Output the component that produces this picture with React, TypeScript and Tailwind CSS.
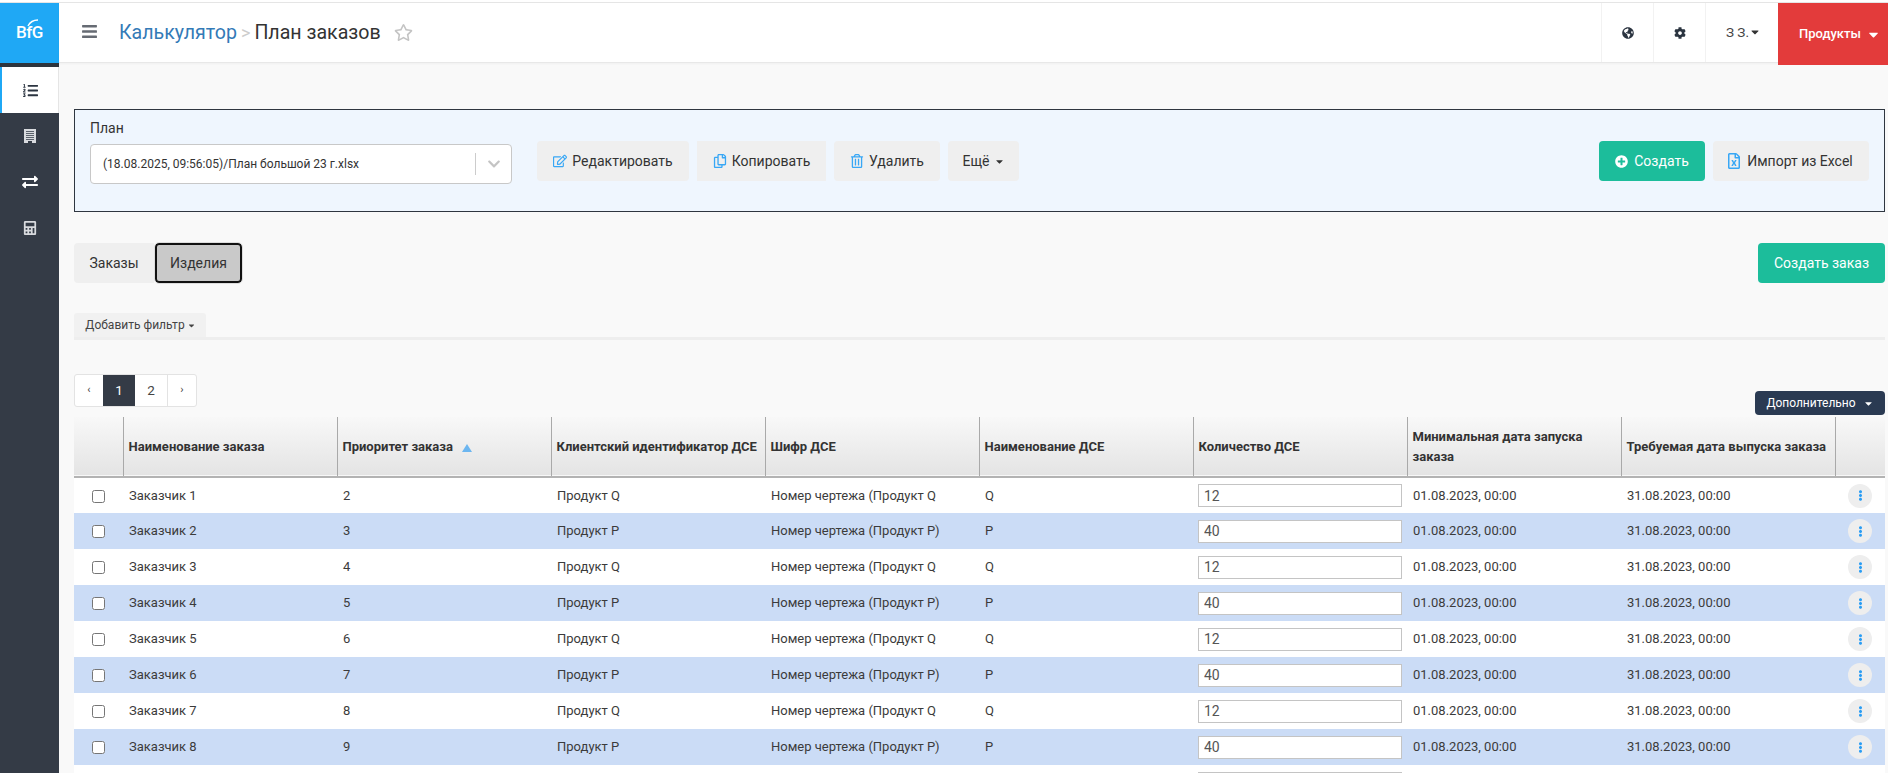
import {
  FaBars,
  FaCalculator,
  FaCaretDown,
  FaCog,
  FaEllipsisV,
  FaExchangeAlt,
  FaGlobeAmericas,
  FaListOl,
  FaPlusCircle,
  FaRegCopy,
  FaRegEdit,
  FaRegFileExcel,
  FaRegStar,
  FaRegTrashAlt,
  FaChevronDown,
} from 'react-icons/fa';

const rows = [
  { name: 'Заказчик 1', priority: 2, id: 'Продукт Q', code: 'Номер чертежа (Продукт Q', dse: 'Q', qty: '12' },
  { name: 'Заказчик 2', priority: 3, id: 'Продукт P', code: 'Номер чертежа (Продукт P)', dse: 'P', qty: '40' },
  { name: 'Заказчик 3', priority: 4, id: 'Продукт Q', code: 'Номер чертежа (Продукт Q', dse: 'Q', qty: '12' },
  { name: 'Заказчик 4', priority: 5, id: 'Продукт P', code: 'Номер чертежа (Продукт P)', dse: 'P', qty: '40' },
  { name: 'Заказчик 5', priority: 6, id: 'Продукт Q', code: 'Номер чертежа (Продукт Q', dse: 'Q', qty: '12' },
  { name: 'Заказчик 6', priority: 7, id: 'Продукт P', code: 'Номер чертежа (Продукт P)', dse: 'P', qty: '40' },
  { name: 'Заказчик 7', priority: 8, id: 'Продукт Q', code: 'Номер чертежа (Продукт Q', dse: 'Q', qty: '12' },
  { name: 'Заказчик 8', priority: 9, id: 'Продукт P', code: 'Номер чертежа (Продукт P)', dse: 'P', qty: '40' },
];

const BuildingIcon = () => (
  <svg width="12" height="14" viewBox="0 0 12 14" fill="#d8dade">
    <path d="M0 0h12v14H8v-2H4v2H0z" />
    <path d="M2 2h8v1H2zM2 4h8v1H2zM2 6h8v1H2zM2 8h8v1H2zM2 10h8v1H2z" fill="#5a616b" />
  </svg>
);

const Logo = () => (
  <div className="flex h-[60px] items-center justify-center bg-[#1fa8f5] text-[17px] font-medium text-white">
    <span className="relative tracking-[-0.5px]">
      BfG
      <svg className="absolute top-[-1px] left-[11px]" width="14" height="8" viewBox="0 0 14 8" fill="none">
        <path d="M1 7C3 3 6 1 11 1" stroke="#ffffff" strokeWidth="1.4" />
      </svg>
    </span>
  </div>
);

const Sidebar = () => (
  <aside className="flex w-[59px] shrink-0 flex-col bg-[#343b46]">
    <Logo />
    <div className="h-1 bg-[#2d343d]" />
    <div className="flex h-[46px] items-center justify-center border-l-2 border-r border-l-[#1fa8f5] border-r-[#e5e5e5] bg-white text-[15px] text-[#2b3440]">
      <FaListOl />
    </div>
    <div className="flex h-[46px] items-center justify-center">
      <BuildingIcon />
    </div>
    <div className="flex h-[46px] items-center justify-center text-[16px] text-white">
      <FaExchangeAlt />
    </div>
    <div className="flex h-[46px] items-center justify-center text-[14px] text-[#d8dade]">
      <FaCalculator />
    </div>
  </aside>
);

const Header = () => (
  <header className="relative flex h-[60px] items-center border-b border-[#e8e8e8] bg-white shadow-[0_1px_2px_rgba(0,0,0,0.04)]">
    <FaBars className="mb-[2px] ml-[22px] text-[17px] text-[#666b73]" />
    <div className="ml-[21px] flex items-center text-[19.6px] leading-none">
      <span className="text-[#337ab7]">Калькулятор</span>
      <span className="mx-[4px] text-[18px] text-[#ccc]">&gt;</span>
      <span className="text-[#333]">План заказов</span>
      <FaRegStar className="ml-[13px] text-[19px] text-[#c4c4c4]" />
    </div>
    <div className="ml-auto flex h-full items-center self-stretch">
      <div className="flex h-full w-[52px] items-center justify-center border-l border-[#f2f2f2] text-[12px] text-[#2b3440]">
        <FaGlobeAmericas />
      </div>
      <div className="flex h-full w-[52px] items-center justify-center border-l border-[#f2f2f2] text-[12px] text-[#2b3440]">
        <FaCog />
      </div>
      <div className="flex h-full w-[73px] items-center border-l border-[#f2f2f2] pb-[1px] pl-[20px] text-[13.5px] text-[#444]">
        З З.
        <FaCaretDown className="text-[12px] text-[#333]" />
      </div>
      <div className="mb-[-3px] flex h-[62px] w-[110px] items-center bg-[#e33b3b] pl-[21px] text-[13px] font-medium text-white">
        Продукты
        <FaCaretDown className="ml-[5px] text-[15px]" />
      </div>
    </div>
  </header>
);

const ToolButton = ({ icon, label, className }: { icon: React.ReactNode; label: string; className: string }) => (
  <button className={`flex h-10 items-center justify-center gap-[5px] bg-[#efefef] text-[14px] text-[#333] ${className}`}>
    <span className="text-[14px] text-[#38a7f5]">{icon}</span>
    {label}
  </button>
);

const PlanBox = () => (
  <section className="flex h-[103px] items-start border border-[#2f3640] bg-[#eff6fe] px-[15px]">
    <div className="w-[422px] shrink-0">
      <div className="mt-[6px] h-[28px] text-[14px] leading-[24px] text-[#333]">План</div>
      <div className="flex h-10 items-center rounded-[4px] border border-[#c8c8c8] bg-white pl-[12px] text-[12px] text-[#333]">
        (18.08.2025, 09:56:05)/План большой 23 г.xlsx
        <div className="ml-auto flex h-[22px] w-[36px] items-center justify-center border-l border-[#ccc]">
          <FaChevronDown className="text-[14px] text-[#c4c4c4]" />
        </div>
      </div>
    </div>
    <div className="mt-[31px] ml-[25px] flex gap-2">
      <ToolButton icon={<FaRegEdit />} label="Редактировать" className="w-[152px] rounded-[4px]" />
      <ToolButton icon={<FaRegCopy />} label="Копировать" className="w-[129px]" />
      <ToolButton icon={<FaRegTrashAlt />} label="Удалить" className="w-[106px] rounded-[4px]" />
      <button className="flex h-10 w-[71px] items-center justify-center gap-[4px] rounded-[4px] bg-[#efefef] text-[14px] text-[#333]">
        Ещё
        <FaCaretDown className="text-[11px]" />
      </button>
    </div>
    <div className="mt-[31px] ml-auto flex gap-2">
      <button className="flex h-10 w-[106px] items-center justify-center gap-[6px] rounded-[4px] bg-[#1cbd9b] text-[14px] text-white">
        <FaPlusCircle className="text-[13px]" />
        Создать
      </button>
      <ToolButton
        icon={<FaRegFileExcel className="text-[16px]" />}
        label="Импорт из Excel"
        className="w-[156px] rounded-[4px] pr-[3px]"
      />
    </div>
  </section>
);

const Tabs = () => (
  <div className="mt-[31px] flex items-start justify-between">
    <div className="flex h-10 text-[14px] text-[#333]">
      <button className="w-20 rounded-l-[4px] bg-[#efefef]">Заказы</button>
      <button className="ml-[1px] w-[87px] rounded-[4px] border-2 border-[#111] bg-[#c9c9c9] outline outline-1 outline-[#ddd]">
        Изделия
      </button>
    </div>
    <button className="h-10 w-[127px] rounded-[4px] bg-[#1cbd9b] text-[14px] text-white">Создать заказ</button>
  </div>
);

const FilterBar = () => (
  <div className="mt-[30px] border-b-[3px] border-[#eeeeee]">
    <button className="flex h-6 w-[132px] items-center justify-center gap-[2px] rounded-t-[3px] bg-[#f1f1f1] pl-[1px] text-[12px] text-[#444]">
      Добавить фильтр
      <FaCaretDown className="text-[9px]" />
    </button>
  </div>
);

const Pagination = () => (
  <div className="mt-[34px] flex items-start justify-between">
    <div className="flex h-[33px] overflow-hidden rounded-[3px] border border-[#e3e3e3] bg-white text-[13.5px] text-[#444]">
      <span className="flex w-[28px] items-center justify-center text-[11px]">‹</span>
      <span className="flex w-[32px] items-center justify-center bg-[#343b46] text-white">1</span>
      <span className="flex w-[33px] items-center justify-center border-r border-[#e3e3e3]">2</span>
      <span className="flex w-[28px] items-center justify-center text-[11px]">›</span>
    </div>
    <button className="mt-[17px] flex h-6 w-[130px] items-center justify-center gap-[7px] rounded-[4px] bg-[#2a3a52] text-[12px] text-white">
      Дополнительно
      <FaCaretDown className="text-[11px]" />
    </button>
  </div>
);

const thClass = 'border-l border-[#a9a9a9] px-[5px] text-left text-[13px] font-bold leading-[20px] text-[#333]';

const OrdersTable = () => (
  <table className="mt-[2px] w-full table-fixed border-collapse text-[13px] text-[#3b3b3b]">
    <colgroup>
      <col className="w-[49px]" />
      <col className="w-[214px]" />
      <col className="w-[214px]" />
      <col className="w-[214px]" />
      <col className="w-[214px]" />
      <col className="w-[214px]" />
      <col className="w-[214px]" />
      <col className="w-[214px]" />
      <col className="w-[214px]" />
      <col className="w-[50px]" />
    </colgroup>
    <thead>
      <tr className="h-[60px] border-b-2 border-[#b3b3b3] bg-gradient-to-b from-[#f8f8f8] via-[#eeeeee] to-[#e4e4e4]">
        <th />
        <th className={thClass}>Наименование заказа</th>
        <th className={thClass}>
          Приоритет заказа
          <span className="ml-[9px] inline-block border-x-[5px] border-b-[8px] border-x-transparent border-b-[#6cb6f0] align-[-1px]" />
        </th>
        <th className={thClass}>Клиентский идентификатор ДСЕ</th>
        <th className={thClass}>Шифр ДСЕ</th>
        <th className={thClass}>Наименование ДСЕ</th>
        <th className={thClass}>Количество ДСЕ</th>
        <th className={thClass}>Минимальная дата запуска заказа</th>
        <th className={thClass}>Требуемая дата выпуска заказа</th>
        <th className={thClass} />
      </tr>
    </thead>
    <tbody>
      {rows.map((row, i) => (
        <tr key={row.name} className={i % 2 === 1 ? 'h-[36px] bg-[#cbdcf6]' : 'h-[36px] bg-white'}>
          <td className="text-center">
            <input type="checkbox" className="size-[13px] align-middle" />
          </td>
          <td className="px-[6px]">{row.name}</td>
          <td className="px-[6px]">{row.priority}</td>
          <td className="px-[6px]">{row.id}</td>
          <td className="px-[6px]">{row.code}</td>
          <td className="px-[6px]">{row.dse}</td>
          <td className="px-[5px]">
            <input
              readOnly
              defaultValue={row.qty}
              className="block h-[23px] w-full border border-[#c4c4c4] bg-white px-[5px] text-[14px] text-[#555]"
            />
          </td>
          <td className="px-[6px]">01.08.2023, 00:00</td>
          <td className="px-[6px]">31.08.2023, 00:00</td>
          <td>
            <div className="mx-auto flex size-6 items-center justify-center rounded-full bg-[#eeeeee] text-[11px] text-[#2a9df4]">
              <FaEllipsisV />
            </div>
          </td>
        </tr>
      ))}
      {/* next row only peeks in at the bottom of the window */}
      <tr className="h-[36px] bg-white">
        <td colSpan={6} />
        <td className="px-[5px]">
          <input readOnly defaultValue="12" className="block h-[23px] w-full border border-[#c4c4c4] bg-white px-[5px] text-[14px] text-[#555]" />
        </td>
        <td colSpan={3} />
      </tr>
    </tbody>
  </table>
);

export default function App() {
  return (
    <div className="flex h-[773px] w-[1888px] flex-col overflow-hidden bg-[#f9f9f9] font-[Roboto,sans-serif]">
      <div className="h-[3px] shrink-0 border-b border-[#e5e5e5] bg-white" />
      <div className="flex min-h-0 flex-1">
        <Sidebar />
        <div className="min-w-0 flex-1">
          <Header />
          <main className="mt-[46px] pr-[3px] pl-[15px]">
            <PlanBox />
            <Tabs />
            <FilterBar />
            <Pagination />
            <OrdersTable />
          </main>
        </div>
      </div>
    </div>
  );
}
